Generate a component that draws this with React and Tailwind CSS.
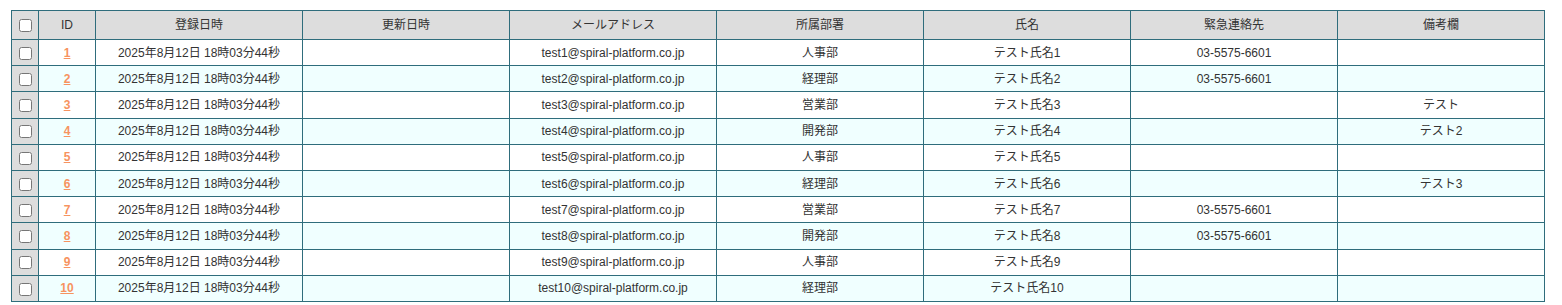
const rows = [
    { id: 1, dept: "人事部", tel: "03-5575-6601", note: "" },
    { id: 2, dept: "経理部", tel: "03-5575-6601", note: "" },
    { id: 3, dept: "営業部", tel: "", note: "テスト" },
    { id: 4, dept: "開発部", tel: "", note: "テスト2" },
    { id: 5, dept: "人事部", tel: "", note: "" },
    { id: 6, dept: "経理部", tel: "", note: "テスト3" },
    { id: 7, dept: "営業部", tel: "03-5575-6601", note: "" },
    { id: 8, dept: "開発部", tel: "03-5575-6601", note: "" },
    { id: 9, dept: "人事部", tel: "", note: "" },
    { id: 10, dept: "経理部", tel: "", note: "" },
];

const headers = ["登録日時", "更新日時", "メールアドレス", "所属部署", "氏名", "緊急連絡先", "備考欄"];

const App = () => {
    return (
        <div className="pt-[10px] pl-[11px] bg-white min-h-[305px]" style={{ fontFamily: '"Liberation Sans", "Noto Sans CJK JP", sans-serif' }}>
            <table className="table-fixed border-collapse w-[1534px] text-[12px] text-[#333]">
                <colgroup>
                    <col className="w-[27px]" />
                    <col className="w-[57px]" />
                    {headers.map((h) => (
                        <col key={h} className="w-[207px]" />
                    ))}
                </colgroup>
                <thead>
                    <tr className="bg-[#dddddd] h-[29px]">
                        <th className="border border-[#2f6d7c] p-0 font-normal">
                            <input type="checkbox" className="align-middle" />
                        </th>
                        <th className="border border-[#2f6d7c] p-0 font-normal">ID</th>
                        {headers.map((h) => (
                            <th key={h} className="border border-[#2f6d7c] p-0 font-normal">
                                {h}
                            </th>
                        ))}
                    </tr>
                </thead>
                <tbody>
                    {rows.map((r, i) => (
                        <tr key={r.id} className={i % 2 === 0 ? "bg-white h-[26.2px]" : "bg-[#f0ffff] h-[26.2px]"}>
                            <td className="border border-[#2f6d7c] p-0 text-center bg-[#dddddd]">
                                <input type="checkbox" className="align-middle" />
                            </td>
                            <td className="border border-[#2f6d7c] p-0 text-center">
                                <a href="#" className="font-bold text-[#f7935f] underline">{r.id}</a>
                            </td>
                            <td className="border border-[#2f6d7c] p-0 text-center">2025年8月12日 18時03分44秒</td>
                            <td className="border border-[#2f6d7c] p-0 text-center"></td>
                            <td className="border border-[#2f6d7c] p-0 text-center">test{r.id}@spiral-platform.co.jp</td>
                            <td className="border border-[#2f6d7c] p-0 text-center">{r.dept}</td>
                            <td className="border border-[#2f6d7c] p-0 text-center">テスト氏名{r.id}</td>
                            <td className="border border-[#2f6d7c] p-0 text-center">{r.tel}</td>
                            <td className="border border-[#2f6d7c] p-0 text-center">{r.note}</td>
                        </tr>
                    ))}
                </tbody>
            </table>
        </div>
    )
}

export default App
